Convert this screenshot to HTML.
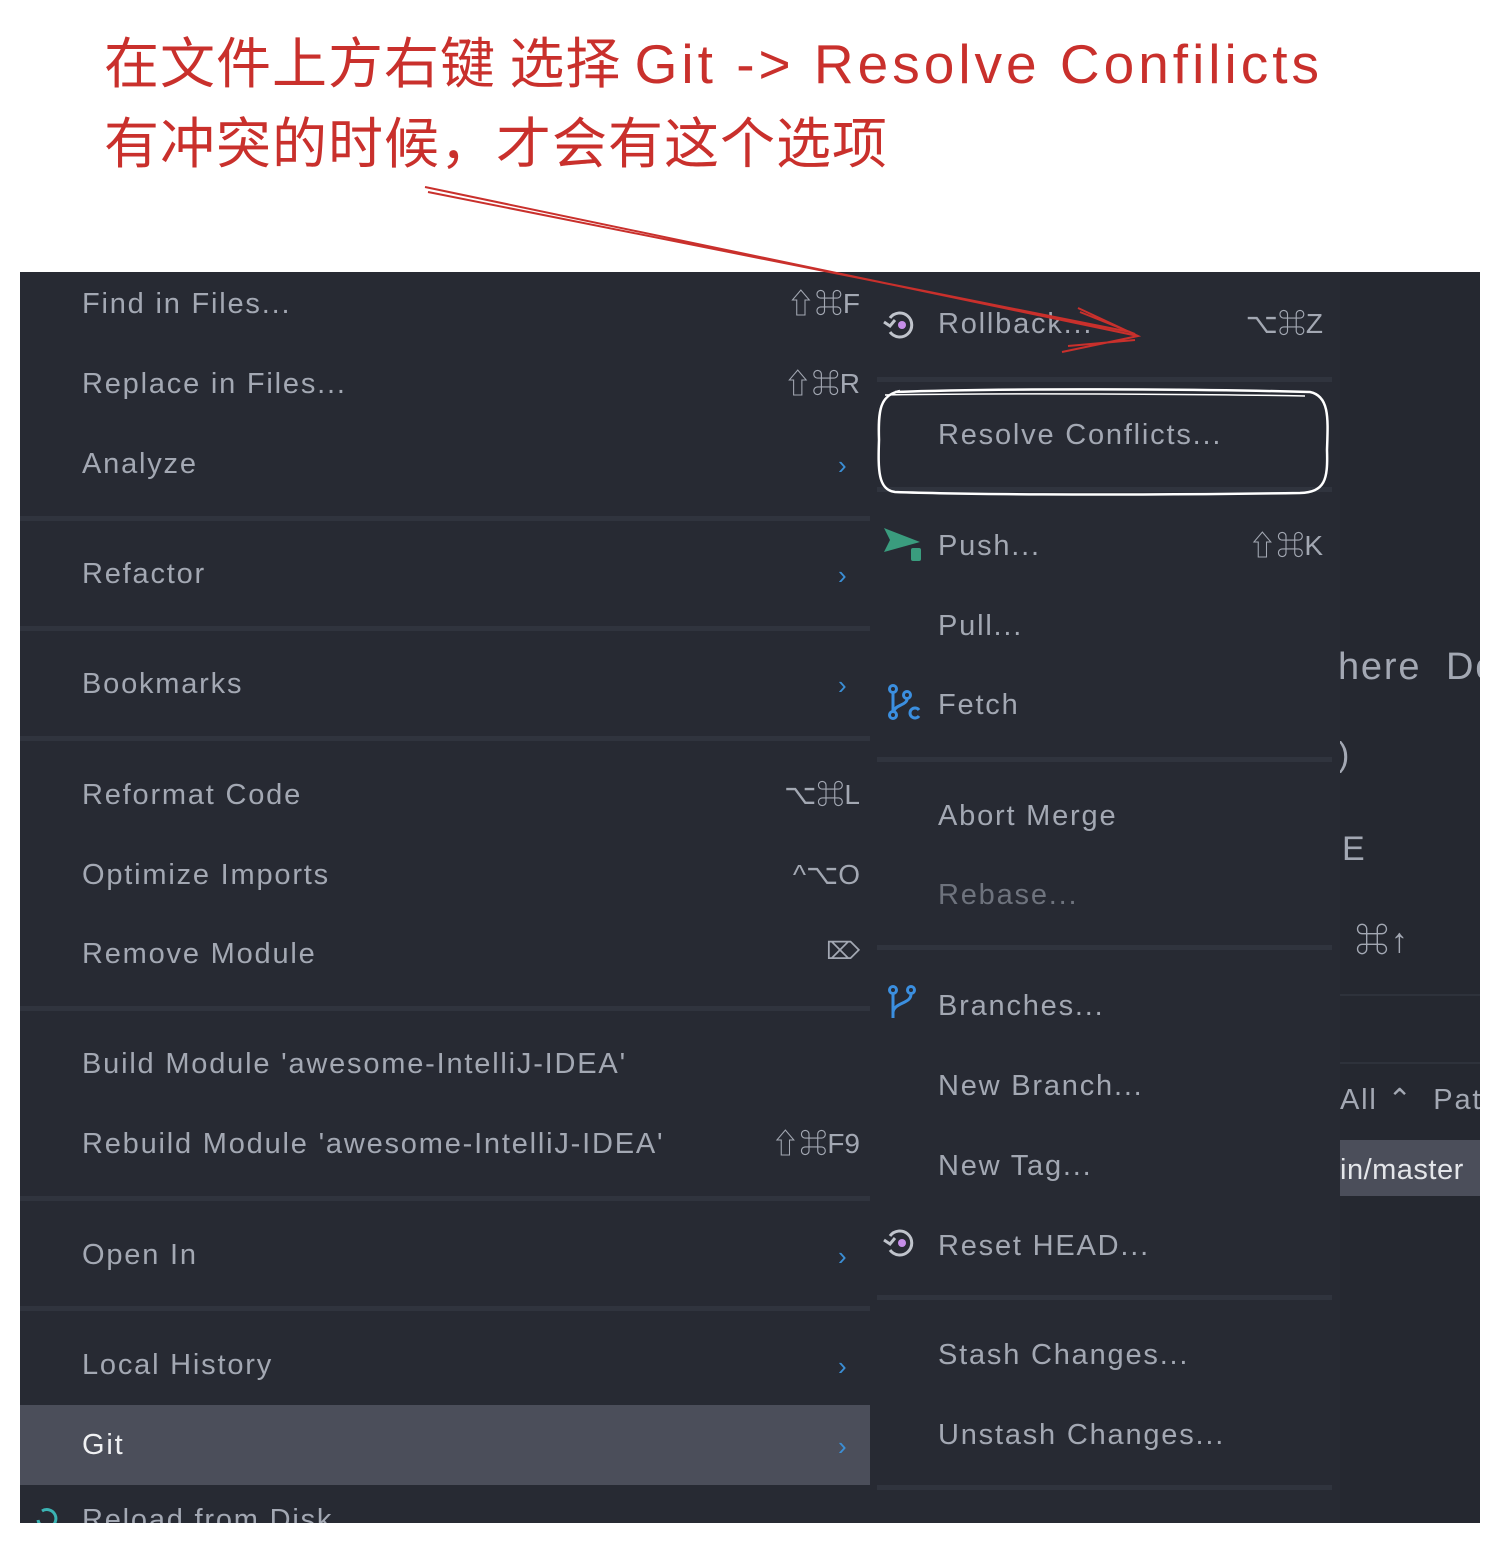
<!DOCTYPE html>
<html><head><meta charset="utf-8"><style>
*{margin:0;padding:0;box-sizing:border-box}
body{width:1499px;height:1543px;background:#fff;position:relative;overflow:hidden;font-family:"Liberation Sans","Noto Sans CJK SC",sans-serif}
.ann{position:absolute;left:104px;color:#c9302c;font-size:55px;font-family:"Noto Sans CJK SC","WenQuanYi Zen Hei",sans-serif;line-height:1;white-space:nowrap;letter-spacing:1px}
.shot{position:absolute;left:20px;top:272px;width:1460px;height:1251px;background:#272a33;overflow:hidden}
.t{position:absolute;color:#a3a8b3;font-size:29px;white-space:nowrap;line-height:1;letter-spacing:1.8px}
.sc{position:absolute;color:#a3a8b3;font-size:28px;white-space:nowrap;line-height:1;text-align:right}
.sep{position:absolute;height:5px;background:#30343e}
.ch{position:absolute;color:#3b8fd6;font-size:26px;line-height:1}
</style></head><body>
<div class="ann" style="top:32px">在文件上方右键 选择 <span style="font-family:'Liberation Sans',sans-serif;letter-spacing:4px">Git -&gt; Resolve Confilicts</span></div>
<div class="ann" style="top:112px">有冲突的时候，才会有这个选项</div>

<div class="shot">
 <div style="position:absolute;left:1320px;top:0;width:140px;height:1251px;background:#252830"></div>
 <div style="position:absolute;left:1320px;top:722px;width:140px;height:2px;background:#2e323b"></div>
 <div style="position:absolute;left:1320px;top:790px;width:140px;height:2px;background:#2e323b"></div>
 <div style="position:absolute;left:1320px;top:868px;width:140px;height:56px;background:#4b4e5a"></div>
 <div class="t" style="left:1318px;top:376px;font-size:38px">here&nbsp; De</div>
 <div class="t" style="left:1318px;top:466px;font-size:34px">)</div>
 <div class="t" style="left:1322px;top:560px;font-size:34px">E</div>
 <div class="t" style="left:1335px;top:652px;font-size:34px">⌘↑</div>
 <div class="t" style="left:1320px;top:814px">All ⌃&nbsp; Path</div>
 <div class="t" style="left:1320px;top:884px;color:#e4e6ea;letter-spacing:0.5px">in/master</div>

 <!-- left menu -->
 <div style="position:absolute;left:0;top:1133px;width:850px;height:80px;background:#4b4e5a"></div>
 <div class="sep" style="left:0;top:244px;width:850px"></div>
 <div class="sep" style="left:0;top:354px;width:850px"></div>
 <div class="sep" style="left:0;top:464px;width:850px"></div>
 <div class="sep" style="left:0;top:734px;width:850px"></div>
 <div class="sep" style="left:0;top:924px;width:850px"></div>
 <div class="sep" style="left:0;top:1034px;width:850px"></div>

 <div class="t" style="left:62px;top:18px">Find in Files...</div><div class="sc" style="right:620px;top:18px">⇧⌘F</div>
 <div class="t" style="left:62px;top:98px">Replace in Files...</div><div class="sc" style="right:620px;top:98px">⇧⌘R</div>
 <div class="t" style="left:62px;top:178px">Analyze</div><div class="ch" style="left:818px;top:180px">›</div>
 <div class="t" style="left:62px;top:288px">Refactor</div><div class="ch" style="left:818px;top:290px">›</div>
 <div class="t" style="left:62px;top:398px">Bookmarks</div><div class="ch" style="left:818px;top:400px">›</div>
 <div class="t" style="left:62px;top:509px">Reformat Code</div><div class="sc" style="right:620px;top:509px">⌥⌘L</div>
 <div class="t" style="left:62px;top:589px">Optimize Imports</div><div class="sc" style="right:620px;top:589px">^⌥O</div>
 <div class="t" style="left:62px;top:668px">Remove Module</div><div class="sc" style="right:620px;top:668px;font-size:24px">⌦</div>
 <div class="t" style="left:62px;top:778px">Build Module 'awesome-IntelliJ-IDEA'</div>
 <div class="t" style="left:62px;top:858px">Rebuild Module 'awesome-IntelliJ-IDEA'</div><div class="sc" style="right:620px;top:858px">⇧⌘F9</div>
 <div class="t" style="left:62px;top:969px">Open In</div><div class="ch" style="left:818px;top:971px">›</div>
 <div class="t" style="left:62px;top:1079px">Local History</div><div class="ch" style="left:818px;top:1081px">›</div>
 <div class="t" style="left:62px;top:1159px;color:#f0f1f3">Git</div><div class="ch" style="left:818px;top:1161px">›</div>
 <div class="t" style="left:62px;top:1234px">Reload from Disk</div>
 <svg style="position:absolute;left:12px;top:1232px" width="30" height="30"><path d="M6 16a9 9 0 1 0 4-9" stroke="#3bb3b3" stroke-width="3" fill="none"/></svg>

 <!-- right menu -->
 <div style="position:absolute;left:850px;top:0;width:470px;height:1251px;background:#272a33"></div>
 <div class="sep" style="left:857px;top:105px;width:455px"></div>
 <div class="sep" style="left:857px;top:215px;width:455px"></div>
 <div class="sep" style="left:857px;top:485px;width:455px"></div>
 <div class="sep" style="left:857px;top:673px;width:455px"></div>
 <div class="sep" style="left:857px;top:1023px;width:455px"></div>
 <div class="sep" style="left:857px;top:1213px;width:455px"></div>

 <svg style="position:absolute;left:862px;top:36px" width="36" height="34"><path d="M8 10a12 12 0 1 1 0 14" stroke="#c0c4cc" stroke-width="3" fill="none"/><path d="M2 14l6 4 5-6" stroke="#c0c4cc" stroke-width="3" fill="none"/><circle cx="20" cy="17" r="4" fill="#c58de8"/></svg>
 <div class="t" style="left:918px;top:38px">Rollback...</div><div class="sc" style="right:157px;top:38px">⌥⌘Z</div>
 <div class="t" style="left:918px;top:149px">Resolve Conflicts...</div>
 <svg style="position:absolute;left:864px;top:256px" width="40" height="40"><path d="M0 0L36 14L0 24L6 12Z" fill="#3a9c7e"/><rect x="27" y="20" width="10" height="13" rx="2" fill="#3a9c7e"/></svg>
 <div class="t" style="left:918px;top:260px">Push...</div><div class="sc" style="right:157px;top:260px">⇧⌘K</div>
 <div class="t" style="left:918px;top:340px">Pull...</div>
 <svg style="position:absolute;left:866px;top:412px" width="36" height="36" fill="none" stroke="#3b8fe0" stroke-width="3"><circle cx="7" cy="5" r="3.5"/><circle cx="7" cy="31" r="3.5"/><circle cx="21" cy="11" r="3.5"/><path d="M7 9v18M21 15c0 6-12 6-13 12"/><path d="M33 26a5 5 0 1 0 0 6"/></svg>
 <div class="t" style="left:918px;top:419px">Fetch</div>
 <div class="t" style="left:918px;top:530px">Abort Merge</div>
 <div class="t" style="left:918px;top:609px;color:#6e737d">Rebase...</div>
 <svg style="position:absolute;left:866px;top:712px" width="34" height="38" fill="none" stroke="#3b8fe0" stroke-width="3"><circle cx="7" cy="6" r="3.5"/><circle cx="25" cy="6" r="3.5"/><path d="M7 10v24M25 10c0 10-16 8-18 18"/></svg>
 <div class="t" style="left:918px;top:720px">Branches...</div>
 <div class="t" style="left:918px;top:800px">New Branch...</div>
 <div class="t" style="left:918px;top:880px">New Tag...</div>
 <svg style="position:absolute;left:862px;top:954px" width="36" height="34"><path d="M8 10a12 12 0 1 1 0 14" stroke="#c0c4cc" stroke-width="3" fill="none"/><path d="M2 14l6 4 5-6" stroke="#c0c4cc" stroke-width="3" fill="none"/><circle cx="20" cy="17" r="4" fill="#c58de8"/></svg>
 <div class="t" style="left:918px;top:960px">Reset HEAD...</div>
 <div class="t" style="left:918px;top:1069px">Stash Changes...</div>
 <div class="t" style="left:918px;top:1149px">Unstash Changes...</div>
</div>

<svg style="position:absolute;left:0;top:0" width="1499" height="1543" fill="none">
 <path d="M425 187L1138 336M428 192L1130 332" stroke="#c9302c" stroke-width="2"/>
 <path d="M1078 308L1138 336L1062 352M1080 312L1135 334M1068 346L1135 340" stroke="#c9302c" stroke-width="2"/>
 <path d="M895 392C1000 388 1200 389 1310 392C1330 396 1328 420 1327 450C1328 480 1325 492 1300 493C1100 496 950 494 895 492C878 490 878 470 879 440C878 410 880 395 900 391" stroke="#fff" stroke-width="2.5"/>
 <path d="M885 395C1000 393 1200 394 1305 396" stroke="#fff" stroke-width="1.5"/>
</svg>
</body></html>
